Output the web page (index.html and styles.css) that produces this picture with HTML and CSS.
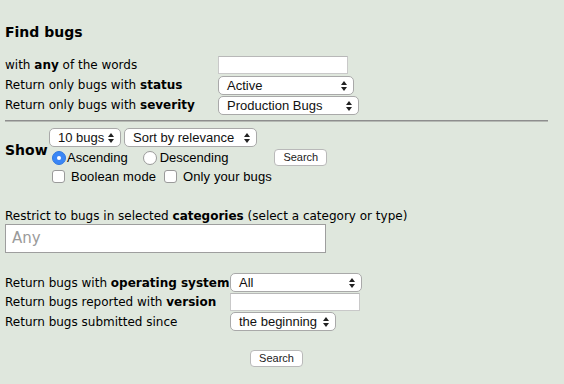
FILE: index.html
```html
<!DOCTYPE html>
<html>
<head>
<meta charset="utf-8">
<link rel="stylesheet" href="styles.css">
</head>
<body>
<div class="page">
  <h3 class="title">Find bugs</h3>

  <div class="grid grid-top">
    <div class="lbl">with <b>any</b> of the words</div>
    <div><input class="txt w130" type="text"></div>
    <div class="lbl">Return only bugs with <b>status</b></div>
    <div><span class="sel w136"><span class="val">Active</span><svg class="arr" width="6" height="10" viewBox="0 0 6 10"><path d="M0 4 L3 0 L6 4 Z M0 6 L3 10 L6 6 Z" fill="#222"/></svg></span></div>
    <div class="lbl">Return only bugs with <b>severity</b></div>
    <div><span class="sel w141"><span class="val">Production Bugs</span><svg class="arr" width="6" height="10" viewBox="0 0 6 10"><path d="M0 4 L3 0 L6 4 Z M0 6 L3 10 L6 6 Z" fill="#222"/></svg></span></div>
  </div>

  <hr class="rule">

  <div class="show">
    <div class="show-lbl">Show</div>
    <div class="show-body">
      <div class="line sels">
        <span class="sel w71"><span class="val">10 bugs</span><svg class="arr" width="6" height="10" viewBox="0 0 6 10"><path d="M0 4 L3 0 L6 4 Z M0 6 L3 10 L6 6 Z" fill="#222"/></svg></span>
        <span class="sel w133"><span class="val">Sort by relevance</span><svg class="arr" width="6" height="10" viewBox="0 0 6 10"><path d="M0 4 L3 0 L6 4 Z M0 6 L3 10 L6 6 Z" fill="#222"/></svg></span>
      </div>
      <div class="line radios">
        <span class="radio on"></span><span class="rtxt">Ascending</span>
        <span class="radio off"></span><span class="rtxt rtxt2">Descending</span>
        <span class="btn btn-show">Search</span>
      </div>
      <div class="line checks">
        <span class="chk"></span><span class="ctxt">Boolean mode</span>
        <span class="chk"></span><span class="ctxt">Only your bugs</span>
      </div>
    </div>
  </div>

  <div class="cat-lbl">Restrict to bugs in selected <b>categories</b> (select a category or type)</div>
  <div class="cat-box">Any</div>

  <div class="grid grid-bottom">
    <div class="lbl">Return bugs with <b>operating system</b></div>
    <div><span class="sel w132"><span class="val">All</span><svg class="arr" width="6" height="10" viewBox="0 0 6 10"><path d="M0 4 L3 0 L6 4 Z M0 6 L3 10 L6 6 Z" fill="#222"/></svg></span></div>
    <div class="lbl">Return bugs reported with <b>version</b></div>
    <div><input class="txt w130" type="text"></div>
    <div class="lbl">Return bugs submitted since</div>
    <div><span class="sel w106"><span class="val">the beginning</span><svg class="arr" width="6" height="10" viewBox="0 0 6 10"><path d="M0 4 L3 0 L6 4 Z M0 6 L3 10 L6 6 Z" fill="#222"/></svg></span></div>
  </div>

  <div class="foot"><span class="btn">Search</span></div>
</div>
</body>
</html>
```

FILE: styles.css
```css
html, body {
  margin: 0;
  padding: 0;
  background: #dfe7dd;
}
body {
  font-family: "DejaVu Sans", Verdana, sans-serif;
  font-size: 12px;
  color: #000;
}
.page {
  padding: 0 16px 0 5px;
}
.title {
  margin: 0;
  padding-top: 23px;
  height: 33px;
  font-size: 14px;
  font-weight: bold;
  line-height: 18px;
  box-sizing: border-box;
}
.grid {
  display: grid;
  align-items: center;
}
.grid-top {
  margin-top: 22px;
  grid-template-columns: 213px auto;
  grid-auto-rows: 20px;
}
.grid-bottom {
  margin-top: 20px;
  grid-template-columns: 225px auto;
  grid-auto-rows: 19.5px;
}
.lbl {
  white-space: nowrap;
  line-height: 16px;
}
.txt {
  display: block;
  box-sizing: border-box;
  height: 18px;
  margin: 0;
  padding: 0 3px;
  border: 1px solid #c9c9c9;
  border-top-color: #b8b8b8;
  background: #fff;
  outline: none;
}
.w130 { width: 130px; }
.sel {
  position: relative;
  display: inline-block;
  box-sizing: border-box;
  height: 19px;
  border: 1px solid #a9a9a9;
  border-radius: 5px;
  background: #fff;
  font-family: "Liberation Sans", Arial, sans-serif;
  font-size: 13px;
  line-height: 17px;
  color: #111;
  vertical-align: top;
}
.sel .val {
  padding-left: 8px;
  white-space: nowrap;
}
.sel .arr {
  position: absolute;
  right: 6px;
  top: 4px;
}
.w136 { width: 136px; }
.w141 { width: 141px; }
.w71 { width: 72px; }
.w133 { width: 133px; }
.w132 { width: 132px; }
.w106 { width: 106px; }
.rule {
  margin: 5px 0 0 0;
  border: none;
  border-top: 1px solid #8e8e8e;
  border-bottom: 1px solid #b5b9b3;
  height: 0;
}
.show {
  display: flex;
  align-items: flex-start;
  margin-top: 5px;
}
.show-lbl {
  font-weight: bold;
  font-size: 14px;
  line-height: 17px;
  width: 44px;
  margin-top: 15px;
}
.show-body {
  display: flex;
  flex-direction: column;
}
.line {
  display: flex;
  align-items: center;
}
.sels {
  gap: 3px;
  height: 20px;
}
.radios {
  height: 19px;
  margin-top: 1px;
}
.radio {
  box-sizing: border-box;
  width: 14px;
  height: 14px;
  border-radius: 50%;
  margin-left: 3px;
  flex: none;
}
.radio.on {
  background: #3a86f6;
  border: 1px solid #2f78e0;
  position: relative;
}
.radio.on::after {
  content: "";
  position: absolute;
  width: 4px;
  height: 4px;
  border-radius: 50%;
  background: #fff;
  left: 4px;
  top: 4px;
}
.radio.off {
  background: #fff;
  border: 1px solid #9a9a9a;
  margin-left: 15px;
}
.rtxt {
  margin-left: 1px;
  font-family: "Liberation Sans", Arial, sans-serif;
  font-size: 13px;
}
.rtxt2 {
  margin-left: 3px;
}
.btn {
  display: inline-block;
  box-sizing: border-box;
  height: 17px;
  padding: 0 8px;
  border: 1px solid #b9b9b9;
  border-radius: 4px;
  background: #fff;
  font-family: "Liberation Sans", Arial, sans-serif;
  font-size: 11px;
  line-height: 15px;
  color: #222;
}
.btn-show {
  margin-left: 46px;
}
.checks {
  height: 19px;
}
.chk {
  box-sizing: border-box;
  width: 13px;
  height: 13px;
  border: 1px solid #9a9a9a;
  border-radius: 3px;
  background: #fff;
  margin-left: 3px;
  flex: none;
}
.chk + .ctxt { margin-left: 6px; }
.ctxt + .chk { margin-left: 8px; }
.ctxt {
  font-family: "Liberation Sans", Arial, sans-serif;
  font-size: 13px;
  letter-spacing: 0.1px;
}
.cat-lbl {
  margin-top: 22px;
  line-height: 16px;
}
.cat-box {
  box-sizing: border-box;
  width: 321px;
  height: 29px;
  margin-top: 0;
  border: 1px solid #9e9e9e;
  background: #fff;
  color: #9a9a9a;
  font-size: 15px;
  line-height: 27px;
  padding-left: 6px;
}
.foot {
  text-align: center;
  margin-top: 18px;
}
```
